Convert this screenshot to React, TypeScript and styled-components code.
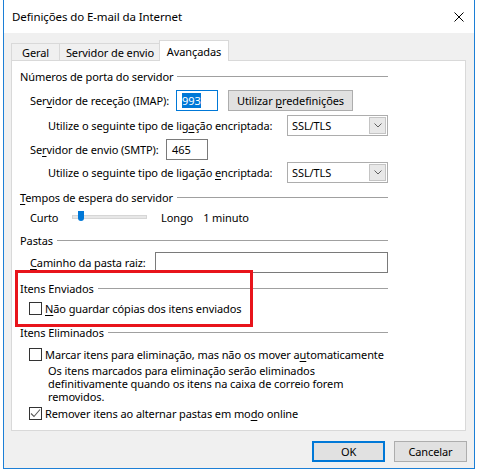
import styled, { createGlobalStyle } from 'styled-components';

const GlobalStyle = createGlobalStyle`
  html, body {
    margin: 0;
    padding: 0;
    background: #fff;
  }
  body {
    font-family: "Noto Sans", "Open Sans", sans-serif;
    font-size: 11px;
    letter-spacing: -0.1px;
    color: #000;
  }
  u {
    text-decoration: underline;
    text-underline-offset: 2px;
  }
`;

const Window = styled.div`
  box-sizing: border-box;
  width: 472px;
  height: 469px;
  margin-left: 3px;
  border: 1px solid #1c7fd6;
  border-top: 0;
  background: #f0f0f0;
  display: flex;
  flex-direction: column;
`;

const TitleBar = styled.div`
  height: 33px;
  flex: none;
  background: #fff;
  display: flex;
  align-items: center;
  justify-content: space-between;
  padding: 0 10px 0 8px;
  font-size: 11.5px;
`;

const CloseIcon = styled.svg`
  width: 10px;
  height: 10px;
  display: block;
`;

const Body = styled.div`
  flex: 1;
  display: flex;
  flex-direction: column;
  padding: 7px 8px 0 7px;
`;

const TabStrip = styled.div`
  position: relative;
  z-index: 1;
  display: flex;
  align-items: flex-end;
  height: 21px;
  margin-bottom: -1px;
`;

const Tab = styled.div<{ $w: number; $active?: boolean; $shift?: number }>`
  box-sizing: border-box;
  width: ${p => p.$w}px;
  height: ${p => (p.$active ? 21 : 17)}px;
  margin-bottom: ${p => (p.$active ? 0 : 1)}px;
  margin-left: ${p => p.$shift ?? 0}px;
  border: 1px solid #d9d9d9;
  border-bottom: 0;
  background: ${p => (p.$active ? '#fff' : '#f0f0f0')};
  display: flex;
  align-items: center;
  justify-content: center;
  padding-top: ${p => (p.$active ? 0 : 1)}px;
`;

const Panel = styled.div`
  box-sizing: border-box;
  height: 371px;
  border: 1px solid #d9d9d9;
  background: #fff;
  padding: 7px 0 0 8px;
`;

const Content = styled.div`
  width: 368px;
  display: flex;
  flex-direction: column;
`;

const GroupHeader = styled.div<{ $mt?: number }>`
  height: 16px;
  margin-top: ${p => p.$mt ?? 0}px;
  display: flex;
  align-items: center;
  gap: 4px;
  white-space: nowrap;
  &::after {
    content: '';
    flex: 1;
    height: 1px;
    background: #a0a0a0;
  }
`;

const Row = styled.div<{ $mt?: number; $indent?: number; $h?: number }>`
  height: ${p => p.$h ?? 21}px;
  margin-top: ${p => p.$mt ?? 0}px;
  padding-left: ${p => p.$indent ?? 10}px;
  display: flex;
  align-items: center;
  white-space: nowrap;
`;

const Label = styled.span<{ $w: number }>`
  width: ${p => p.$w}px;
  flex: none;
`;

const TextBox = styled.div<{ $w: number; $focused?: boolean }>`
  box-sizing: border-box;
  width: ${p => p.$w}px;
  height: 21px;
  border: 1px solid ${p => (p.$focused ? '#0078d7' : '#7a7a7a')};
  background: #fff;
  display: flex;
  align-items: center;
  padding-left: 5px;
`;

const Selection = styled.span`
  background: #0078d7;
  color: #fff;
  line-height: 15px;
`;

const Button = styled.div<{ $w: number; $default?: boolean }>`
  box-sizing: border-box;
  width: ${p => p.$w}px;
  height: 21px;
  border: ${p => (p.$default ? '2px solid #0078d7' : '1px solid #adadad')};
  background: #e1e1e1;
  display: flex;
  align-items: center;
  justify-content: center;
`;

const Select = styled.div`
  box-sizing: border-box;
  width: 101px;
  height: 21px;
  border: 1px solid #adadad;
  background: #fff;
  display: flex;
  align-items: center;
  justify-content: space-between;
  padding: 1px 1px 1px 4px;
`;

const SelectArrow = styled.div`
  box-sizing: border-box;
  width: 17px;
  height: 17px;
  border: 1px solid #c4c4c4;
  background: #e8e8e8;
  display: flex;
  align-items: center;
  justify-content: center;
`;

const SliderTrack = styled.div`
  position: relative;
  box-sizing: border-box;
  width: 75px;
  height: 4px;
  margin: 0 14px 0 15px;
  background: #e7e7e7;
  border: 1px solid #d6d6d6;
`;

const SliderThumb = styled.div`
  position: absolute;
  left: 5px;
  top: -5px;
  width: 6px;
  height: 10px;
  background: #0078d7;
  border-radius: 0 0 3px 3px;
`;

const Gap = styled.span<{ $w: number }>`
  display: inline-block;
  width: ${p => p.$w}px;
`;

const Check = styled.span`
  box-sizing: border-box;
  width: 13px;
  height: 13px;
  flex: none;
  border: 1px solid #333;
  background: #fff;
  margin: 0 3px 0 -1px;
  display: flex;
  align-items: center;
  justify-content: center;
`;

const Highlight = styled.div`
  position: relative;
  display: flex;
  flex-direction: column;
  &::after {
    content: '';
    position: absolute;
    left: -5px;
    top: -3px;
    width: 238px;
    bottom: -11px;
    border: 3px solid #e8141b;
    box-sizing: border-box;
  }
`;

const Note = styled.div`
  margin-top: 2px;
  padding-left: 28px;
  line-height: 13px;
  white-space: nowrap;
`;

const Footer = styled.div`
  display: flex;
  justify-content: flex-end;
  gap: 9px;
  margin: 10px -1px 0 0;
`;

const Chevron = () => (
  <svg width="8" height="5" viewBox="0 0 8 5">
    <path d="M0.5 0.5 L4 4 L7.5 0.5" fill="none" stroke="#606060" strokeWidth="1" />
  </svg>
);

const Tick = () => (
  <svg width="11" height="11" viewBox="0 0 11 11">
    <path d="M1 5.5 L4 8.5 L10 1.5" fill="none" stroke="#5a5a5a" strokeWidth="1.1" />
  </svg>
);

const App = () => {
  return (
    <>
      <GlobalStyle />
      <Window>
        <TitleBar>
          <span>Definições do E-mail da Internet</span>
          <CloseIcon viewBox="0 0 10 10">
            <path d="M0.5 0.5 L9.5 9.5 M9.5 0.5 L0.5 9.5" stroke="#000" strokeWidth="1" />
          </CloseIcon>
        </TitleBar>
        <Body>
          <TabStrip>
            <Tab $w={49}>Geral</Tab>
            <Tab $w={102} $shift={-1}>Servidor de envio</Tab>
            <Tab $w={70} $shift={-2} $active>Avançadas</Tab>
          </TabStrip>
          <Panel>
            <Content>
              <GroupHeader>Números de porta do servidor</GroupHeader>
              <Row $mt={6}>
                <Label $w={146}>Ser<u>v</u>idor de receção (IMAP):</Label>
                <TextBox $w={42} $focused><Selection>993</Selection></TextBox>
                <Gap $w={10} />
                <Button $w={125}>Utilizar&nbsp;<u>p</u>redefinições</Button>
              </Row>
              <Row $mt={4} $indent={28}>
                <Label $w={239}>Utilize o seguinte tipo de lig<u>a</u>ção encriptada:</Label>
                <Select>SSL/TLS<SelectArrow><Chevron /></SelectArrow></Select>
              </Row>
              <Row $mt={3}>
                <Label $w={136}>Se<u>r</u>vidor de envio (SMTP):</Label>
                <TextBox $w={42}>465</TextBox>
              </Row>
              <Row $mt={2} $indent={28}>
                <Label $w={239}>Utilize o seguinte tipo de ligação <u>e</u>ncriptada:</Label>
                <Select>SSL/TLS<SelectArrow><Chevron /></SelectArrow></Select>
              </Row>
              <GroupHeader $mt={6}><span><u>T</u>empos de espera do servidor</span></GroupHeader>
              <Row $mt={4} $h={16}>
                <Label $w={27}>Curto</Label>
                <SliderTrack><SliderThumb /></SliderTrack>
                <span>Longo</span>
                <Gap $w={10} />
                <span>1 minuto</span>
              </Row>
              <GroupHeader $mt={7}>Pastas</GroupHeader>
              <Row $mt={4}>
                <Label $w={125}><u>C</u>aminho da pasta raiz:</Label>
                <TextBox $w={233} />
              </Row>
              <Highlight>
                <GroupHeader $mt={7}>Itens Enviados</GroupHeader>
                <Row $mt={4} $h={16}>
                  <Check />
                  <span><u>N</u>ão guardar cópias dos itens enviados</span>
                </Row>
              </Highlight>
              <GroupHeader $mt={8}>Itens Eliminados</GroupHeader>
              <Row $mt={6} $h={16}>
                <Check />
                <span>Marcar itens para eliminação, mas não os mover a<u>u</u>tomaticamente</span>
              </Row>
              <Note>
                Os itens marcados para eliminação serão eliminados<br />
                definitivamente quando os itens na caixa de correio forem<br />
                removidos.
              </Note>
              <Row $mt={2} $h={16}>
                <Check><Tick /></Check>
                <span>Remover itens ao alternar pastas em mo<u>d</u>o online</span>
              </Row>
            </Content>
          </Panel>
          <Footer>
            <Button $w={73} $default>OK</Button>
            <Button $w={73}>Cancelar</Button>
          </Footer>
        </Body>
      </Window>
    </>
  );
};

export default App;
